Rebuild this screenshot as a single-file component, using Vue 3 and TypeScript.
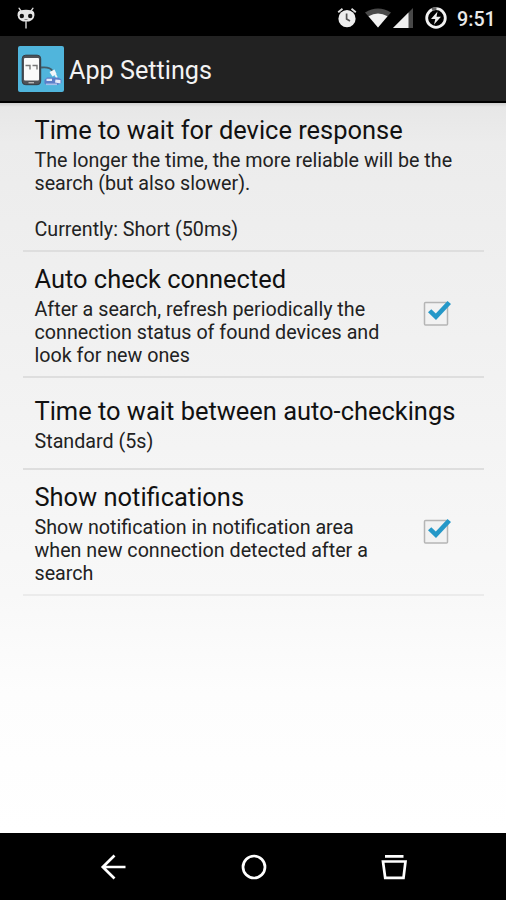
<script setup lang="ts">
import { ref } from 'vue'

interface Preference {
  id: string
  title: string
  lines: string[]
  checkable: boolean
  checked: boolean
}

const preferences = ref<Preference[]>([
  {
    id: 'wait',
    title: 'Time to wait for device response',
    lines: ['The longer the time, the more reliable will be the', 'search (but also slower).', '', 'Currently: Short (50ms)'],
    checkable: false,
    checked: false,
  },
  {
    id: 'auto',
    title: 'Auto check connected',
    lines: ['After a search, refresh periodically the', 'connection status of found devices and', 'look for new ones'],
    checkable: true,
    checked: true,
  },
  {
    id: 'interval',
    title: 'Time to wait between auto-checkings',
    lines: ['Standard (5s)'],
    checkable: false,
    checked: false,
  },
  {
    id: 'notify',
    title: 'Show notifications',
    lines: ['Show notification in notification area', 'when new connection detected after a', 'search'],
    checkable: true,
    checked: true,
  },
])

function toggle(item: Preference) {
  if (item.checkable) item.checked = !item.checked
}
</script>

<template>
  <div class="screen">
    <header class="status">
      <svg class="cid" width="20" height="24" viewBox="0 0 20 24">
        <path d="M3 2.2 5 5M17 2.2 15 5" stroke="#ddd" stroke-width="1.3" stroke-linecap="round" />
        <path d="M4 4.500Q10 3 16 4.500Q18.800 5.500 18.400 9.500Q17.800 14 13 15.500H7Q2.200 14 1.600 9.500Q1.200 5.500 4 4.500Z" fill="#e6e6e6" />
        <circle cx="5.800" cy="10" r="2.200" fill="#111" />
        <circle cx="14.200" cy="10" r="2.200" fill="#111" />
        <path d="M8.500 13.500H11.500" stroke="#888" stroke-width="1" />
        <path d="M10 15V22.500" stroke="#ccc" stroke-width="1.500" />
      </svg>
      <div class="indicators">
        <svg class="alarm" width="20" height="22" viewBox="0 0 20 22">
          <circle cx="10" cy="12.700" r="8.600" fill="#eee" />
          <path d="M1.200 6.300 5.500 2.700M18.800 6.300 14.500 2.700" stroke="#ddd" stroke-width="1.800" />
          <path d="M9.600 7.500V13L13 15" fill="none" stroke="#555" stroke-width="1.700" />
        </svg>
        <svg class="wifi" width="26" height="20" viewBox="0 0 26 20">
          <path d="M0 4.500Q13-3.700 26 4.500L13 19.500Z" fill="#4a4a4a" />
          <path d="M3.500 8.300Q13 2.500 22.500 8.300L13 19.500Z" fill="#f2f2f2" />
        </svg>
        <svg class="signal" width="20" height="20" viewBox="0 0 20 20">
          <path d="M0 20 20 0V20Z" fill="#484848" />
          <path d="M0 20 15.500 4.500V20Z" fill="#eee" />
        </svg>
        <svg class="battery" width="22" height="23" viewBox="0 0 22 23">
          <circle cx="11" cy="12" r="9.300" fill="none" stroke="#f2f2f2" stroke-width="2.800" />
          <path d="M7 3.600Q9 2.500 11.500 2.700" fill="none" stroke="#666" stroke-width="2.800" />
          <path d="M12.500 5.500 6 13H10.300L9 18.500 16 10.800H11.500Z" fill="#eee" />
        </svg>
        <span class="clock">9:51</span>
      </div>
    </header>

    <div class="action-bar">
      <svg class="logo" width="46" height="46" viewBox="0 0 46 46">
        <rect width="46" height="46" rx="2" fill="#50b5dc" />
        <rect x="4.200" y="9.200" width="18.500" height="29.500" rx="3.500" fill="#505258" stroke="#35383d" stroke-width="1" />
        <rect x="6" y="12" width="15" height="22.500" rx="1" fill="#fafafa" />
        <path d="M7.500 19.500H12V23.500M14.500 19.500H19V23.500" fill="none" stroke="#777" stroke-width="1.400" />
        <path d="M10.500 36.700H16" stroke="#bbb" stroke-width="1.300" />
        <path d="M23 21.500Q32 20.500 34.500 25" fill="none" stroke="#435d69" stroke-width="1.800" />
        <path d="M31.500 26 36.500 23.500 38.500 28 34.500 30.500Z" fill="#f2f6f9" />
        <path d="M37 28 39 32" stroke="#edf4f8" stroke-width="1.800" />
        <path d="M26.500 34 29 31.500H40L43.500 33.500V37L39.500 39H29L26.500 37.500Z" fill="#5b7fc9" />
        <path d="M28.500 32.800H34V35H28.500ZM37.500 33.500 42.500 34V37.500L37 36.500Z" fill="#e3ebf9" />
        <path d="M28 38.300H39" stroke="#a9bfe8" stroke-width="1.600" />
      </svg>
      <h1>App Settings</h1>
    </div>

    <main class="list">
      <section v-for="item in preferences" :key="item.id" class="row" :class="item.id" @click="toggle(item)">
        <div class="copy">
          <h2>{{ item.title }}</h2>
          <p v-for="(line, i) in item.lines" :key="i">{{ line }}</p>
        </div>
        <svg v-if="item.checkable" class="check" width="30" height="28" viewBox="0 0 30 28">
          <rect x="1.500" y="3.500" width="23" height="22.500" rx="1" fill="#f2f2f2" stroke="#b5b5b5" stroke-width="1.500" />
          <path v-if="item.checked" d="M5 13.300 8.300 10.300 12.800 14.500 24.500 2 28 5 13 20.900Z" fill="#2598c8" />
        </svg>
      </section>
    </main>

    <nav class="nav">
      <svg width="26" height="26" viewBox="0 0 26 26">
        <path d="M14.500 1.500 2.800 13 14.500 24.500M2.800 13H25.500" />
      </svg>
      <svg width="26" height="26" viewBox="0 0 26 26">
        <circle cx="13" cy="13" r="11" />
      </svg>
      <svg width="26" height="26" viewBox="0 0 26 26">
        <path d="M4 2.300H22.500M2 7.500H24.500L22.500 23.800H4.200Z" />
      </svg>
    </nav>
  </div>
</template>

<style>
body {
  margin: 0;
  background: #000;
}
</style>

<style scoped>
.screen {
  width: 506px;
  height: 900px;
  display: flex;
  flex-direction: column;
  overflow: hidden;
  background: #000;
  font-family: Roboto, sans-serif;
}
.status {
  height: 36px;
  flex: none;
  box-sizing: border-box;
  display: flex;
  justify-content: space-between;
  align-items: flex-start;
  padding: 6px 12px 0 16px;
}
.indicators {
  display: flex;
  align-items: flex-start;
}
.alarm { margin-right: 8px; }
.wifi { margin: 2px 2px 0 0; }
.signal { margin: 2px 12px 0 0; }
.battery { margin-right: 10px; }
.clock {
  color: #e9e9e9;
  font-size: 19.700px;
  font-weight: 500;
  line-height: 24px;
  margin-top: 2px;
  width: 37px;
  white-space: nowrap;
}
.action-bar {
  height: 67px;
  flex: none;
  box-sizing: border-box;
  display: flex;
  align-items: center;
  padding: 1px 19px 0 18px;
  background: #222;
  border-bottom: 2px solid #000;
}
.logo { margin-right: 5px; }
h1 {
  margin: 4px 0 0;
  color: #f3f3f3;
  font-size: 25.200px;
  font-weight: 400;
  line-height: 30px;
}
.list {
  flex: 1;
  padding: 0 22px 0 23px;
  background: linear-gradient(#cfcfcf 0, #e7e7e7 4px, #ececec 40px, #f0f0f0 200px, #f8f8f8 490px, #fdfdfd 590px, #fff);
}
.row {
  box-sizing: border-box;
  display: flex;
  justify-content: space-between;
  align-items: center;
  padding: 0 31px 0 11.500px;
  border-bottom: 2px solid #dedede;
}
.wait {
  height: 149px;
  padding-top: 1px;
}
.auto {
  height: 126px;
  padding-top: 1px;
}
.interval { height: 92px; }
.notify { height: 126px; border-bottom-color: #ebebeb; }
.copy { margin-bottom: -3px; }
h2 {
  margin: 0 0 5px;
  font-size: 25.450px;
  font-weight: 400;
  line-height: 28px;
  color: #111;
  white-space: nowrap;
}
p {
  margin: 0;
  height: 23px;
  font-size: 19.700px;
  line-height: 23px;
  color: #222;
  white-space: nowrap;
}
.check {
  flex: none;
  margin-bottom: 3px;
}
.nav {
  height: 67px;
  flex: none;
  display: flex;
  justify-content: space-between;
  align-items: center;
  padding: 0 99px 0 100px;
  background: #000;
}
.nav svg {
  fill: none;
  stroke: #fff;
  stroke-width: 2.700;
}
</style>
